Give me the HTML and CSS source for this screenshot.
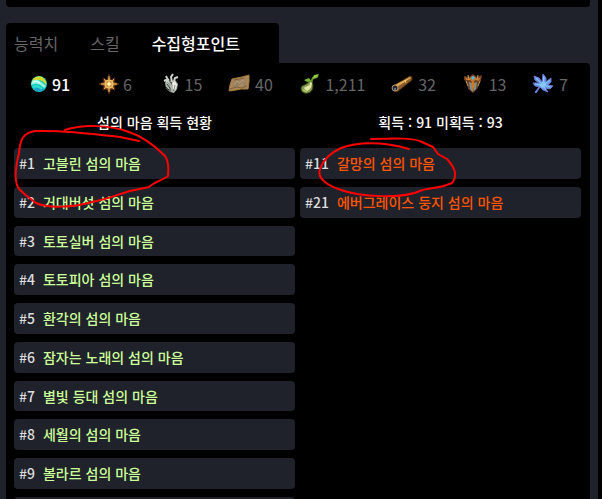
FILE: index.html
```html
<!DOCTYPE html>
<html lang="ko">
<head>
<meta charset="utf-8">
<meta name="viewport" content="width=device-width, initial-scale=1">
<title>수집형포인트</title>
<link rel="stylesheet" href="styles.css">
</head>
<body>
<main class="page">
  <div class="previous-panel"></div>
  <nav class="tabs">
    <button class="tab" type="button">능력치</button>
    <button class="tab" type="button">스킬</button>
    <button class="tab active" type="button">수집형포인트</button>
  </nav>
  <section class="panel">
    <div class="points">
      <button class="point active" type="button">
        <svg class="icon" viewBox="0 0 24 24"><circle cx="15" cy="12" r="8" fill="#1bc9bd"/><path d="M9 7Q13 3 18 5Q23 8 22 13Q19 8 14 8L8 9Z" fill="#d2d92c"/><path d="M8 9Q13 6 17 10L22 14L20 16Q15 11 10 12L7 13Z" fill="#8ff5df"/><path d="M9 10Q13 8 16 11" stroke="#f2fff8" fill="none"/><path d="M9 17Q14 14 21 17Q17 21 12 19Z" fill="#1d9ec9"/><path d="M9 15Q13 13 18 17" stroke="#2be2cf" fill="none" stroke-width="2"/></svg>91</button>
      <button class="point" type="button">
        <svg class="icon" viewBox="0 0 24 24"><path d="M14 2L16 8L20 6L19 10L24 12L19 14L20 18L16 17L14 22L12 17L8 18L9 14L4 12L9 10L8 6L12 8Z" fill="#a9682a" stroke="#4a2413"/><path d="M14 4V20M6 12H22M9 7L19 17M19 7L9 17" stroke="#e0a850"/><circle cx="14" cy="12" r="4" fill="#d39a3f" stroke="#edc878"/><path d="M14 9L15 11L17 12L15 13L14 15L13 13L11 12L13 11Z" fill="#fff2b5"/></svg>6</button>
      <button class="point" type="button">
        <svg class="icon" viewBox="0 0 24 24"><path d="M8 11L10 8L14 9L18 8L21 12L20 17L17 21L13 20L9 16Z" fill="#aeb4ad"/><path d="M11 11L9 8L7 9M13 10L10 6L9 4M15 10L14 5L16 2M17 9L18 6L21 5" fill="none" stroke="#cbd3ca" stroke-width="2"/><path d="M10 12L13 16L13 20M14 10L17 16L17 19M9 15L12 18M12 8L14 11" fill="none" stroke="#39423f"/><path d="M15 11L18 9L20 13L18 19L16 17Z" fill="#efeee2"/><path d="M18 13L17 18M10 10L13 13" stroke="#8b9490"/></svg>15</button>
      <button class="point" type="button">
        <svg class="icon" viewBox="0 0 24 24"><path d="M5 7L10 6L15 5L22 3L22 10L21 17L14 17L9 18L2 19L3 13Z" fill="#a98758" stroke="#a87a3c"/><path d="M6 9L19 6L19 14L5 16Z" fill="#9c815f"/><path d="M7 13L10 9L13 11L15 8L18 10M12 15L16 12" fill="none" stroke="#b49c81"/><path d="M3 17L10 15L15 16L20 14M7 8L17 6" fill="none" stroke="#80603a"/></svg>40</button>
      <button class="point" type="button">
        <svg class="icon" viewBox="0 0 24 24"><path d="M15 9C17 14 16 20 11 21C7 22 4 20 4 16C5 12 10 14 12 9Z" fill="#849d4a" stroke="#35471e"/><path d="M13 10C14 14 9 14 7 16Q9 20 12 18Q15 15 15 11Z" fill="#e3e4ab"/><path d="M14 10L16 6L21 4" fill="none" stroke="#659527" stroke-width="2"/><path d="M15 7L17 3L22 2L20 6ZM7 8L12 6L14 9L10 10Z" fill="#76b82b"/><path d="M17 5L20 3M6 18L10 20" stroke="#c5dd67"/></svg>1,211</button>
      <button class="point" type="button">
        <svg class="icon" viewBox="0 0 24 24"><path d="M3 14L20 4L22 5L22 8L7 20L4 19Z" fill="#8b5928" stroke="#50300f"/><path d="M5 13L20 5L21 6L7 15Z" fill="#dba954"/><path d="M15 8L16 11" stroke="#f0c575"/><circle cx="5" cy="16" r="3" fill="#262833" stroke="#b7996f"/><circle cx="5" cy="17" r="1" fill="#718caa"/></svg>32</button>
      <button class="point" type="button">
        <svg class="icon" viewBox="0 0 24 24"><path d="M3 4L8 5L12 2L16 5L21 3L20 9L18 10L17 16L12 21L7 17L6 10L3 8Z" fill="#6b4024"/><path d="M4 5L8 7L11 4L13 4L16 7L20 5L18 9L14 8L12 11L9 8L5 8Z" fill="#c5762b"/><path d="M8 10L9 17L12 20L11 11Z M16 10L15 17L13 19L13 11Z" fill="#7092a1"/><path d="M12 9L14 12L12 20L10 12Z" fill="#d67720"/><path d="M12 4L14 6L12 8L10 6Z" fill="#42bee5"/><path d="M5 9L7 14M19 9L17 14M7 3L8 8M17 3L16 8" stroke="#cfa05c"/></svg>13</button>
      <button class="point" type="button">
        <svg class="icon" viewBox="0 0 24 24"><path d="M12 14L9 15L4 14L2 11L8 11L4 8L3 4L8 6L11 10L12 2L15 6L15 10L20 6L20 10L17 13L22 14L19 17L14 16L17 20L12 18L9 15L5 21L4 20L9 14Z" fill="#679be8" stroke="#6c75d4"/><path d="M12 13L5 6M12 13L13 4M12 13L19 8M12 13L19 15M12 13L4 12M12 13L15 18" stroke="#8cc8fa"/><path d="M10 11L13 9L15 13L12 16L8 14Z" fill="#86c9f4"/></svg>7</button>
    </div>
    <div class="columns">
      <section>
        <h2 class="heading">섬의 마음 획득 현황</h2>
        <ul class="list">
          <li class="row"><span>#1</span><span class="name">고블린 섬의 마음</span></li>
          <li class="row"><span>#2</span><span class="name">거대버섯 섬의 마음</span></li>
          <li class="row"><span>#3</span><span class="name">토토실버 섬의 마음</span></li>
          <li class="row"><span>#4</span><span class="name">토토피아 섬의 마음</span></li>
          <li class="row"><span>#5</span><span class="name">환각의 섬의 마음</span></li>
          <li class="row"><span>#6</span><span class="name">잠자는 노래의 섬의 마음</span></li>
          <li class="row"><span>#7</span><span class="name">별빛 등대 섬의 마음</span></li>
          <li class="row"><span>#8</span><span class="name">세월의 섬의 마음</span></li>
          <li class="row"><span>#9</span><span class="name">볼라르 섬의 마음</span></li>
          <li class="row"></li>
        </ul>
      </section>
      <section>
        <h2 class="heading">획득 : 91 미획득 : 93</h2>
        <ul class="list missing">
          <li class="row"><span>#11</span><span class="name">갈망의 섬의 마음</span></li>
          <li class="row"><span>#21</span><span class="name">에버그레이스 둥지 섬의 마음</span></li>
        </ul>
      </section>
    </div>
  </section>
</main>
<svg class="marks" width="602" height="499" viewBox="0 0 602 499" aria-hidden="true">
  <path d="M139 141L120 137C95 134 65 130 35 131C22 133 20 141 19 153C15 169 14 184 20 190C26 196 31 199 36 203C49 209 75 207 92 202C109 199 119 194 130 191L149 187C154 182 163 180 168 176C169 166 168 160 165 156C155 146 144 137 129 132C110 125 83 124 65 130" fill="none"/>
  <path d="M371 139C400 138 414 138 422 142L433 147L438 154L447 159C455 168 458 175 452 183C439 189 430 187 420 191C403 199 360 197 341 190C329 186 316 179 320 169C323 160 330 153 341 148C356 142 383 141 409 149" fill="none"/>
</svg>
</body>
</html>
```
FILE: styles.css
```css
* {
  box-sizing: border-box;
}

html {
  background: #000;
}

body {
  position: relative;
  height: 100vh;
  margin: 0;
  overflow: hidden;
  color: #fff;
  font-family: "Noto Sans CJK KR", sans-serif;
  font-size: 14px;
  font-weight: 500;
}

.page {
  display: flex;
  flex-direction: column;
  align-items: stretch;
  min-height: 100vh;
  margin-right: 4px;
  padding: 0 8px 0 6px;
  background: #20222b;
}

.previous-panel {
  height: 7px;
  margin-bottom: 16px;
  border-radius: 0 0 4px 4px;
  background: #000;
}

.tabs {
  display: flex;
  gap: 32px;
  align-self: flex-start;
  height: 40px;
  padding: 0 39px 0 8px;
  border-radius: 4px 4px 0 0;
  background: #000;
}

button {
  padding: 0;
  border: 0;
  background: none;
  color: #666;
  font: inherit;
  font-size: 16px;
  font-weight: 400;
  cursor: pointer;
}

button.active {
  color: #fff;
  font-weight: 500;
}

.panel {
  flex: 1;
  padding: 0 9px 0 8px;
  border-radius: 0 4px 0 0;
  background: #000;
}

.points {
  display: flex;
  justify-content: space-between;
  height: 41px;
  padding: 0 13px 0 10px;
}

.point {
  display: flex;
  align-items: center;
  gap: 4px;
}

.icon {
  width: 24px;
  height: 24px;
}

.columns {
  display: grid;
  grid-template-columns: 1fr 1fr;
  gap: 5px;
}

.heading {
  margin: 0;
  font-size: 14px;
  font-weight: 500;
  line-height: 36px;
  text-align: center;
}

.list {
  display: grid;
  gap: 8px;
  margin: 8px 0 0;
  padding: 0;
  list-style: none;
}

.row {
  display: flex;
  gap: 8px;
  min-height: 30px;
  padding: 3px 5px 2px;
  border-radius: 4px;
  background: #20222b;
  color: #ddd;
  line-height: 1.84;
}

.name {
  color: #cf9;
}

.missing .name {
  color: #ff5500;
}

.marks {
  position: absolute;
  top: 0;
  left: 0;
  stroke: #ff0000;
  stroke-width: 2;
  stroke-linecap: round;
  stroke-linejoin: round;
  pointer-events: none;
}
```
